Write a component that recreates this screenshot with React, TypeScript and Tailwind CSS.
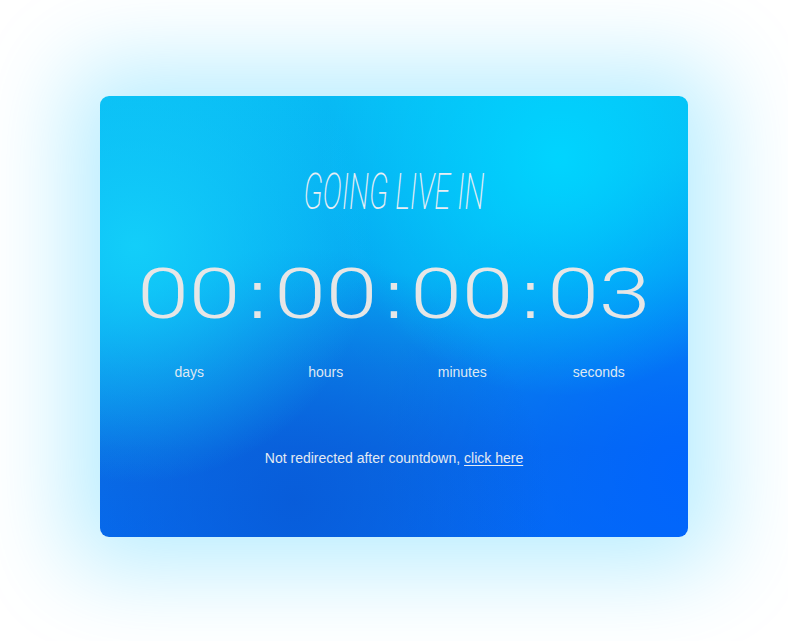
import React from "react";

const cols = [
  { v: "00", l: "days" },
  { v: "00", l: "hours" },
  { v: "00", l: "minutes" },
  { v: "03", l: "seconds" },
];

export default function App() {
  return (
    <div className="min-h-screen w-full bg-white flex justify-center pt-[96px]">
      <div
        className="w-[588px] h-[441px] rounded-[9px] shadow-[0_0_90px_30px_rgba(0,190,255,0.28)] flex flex-col items-center bg-[radial-gradient(circle_at_78%_14%,rgba(0,214,255,0.95)_0%,rgba(0,214,255,0)_40%),radial-gradient(circle_at_6%_34%,rgba(20,210,250,0.9)_0%,rgba(20,210,250,0)_38%),radial-gradient(circle_at_33%_92%,rgba(8,90,215,0.85)_0%,rgba(8,90,215,0)_45%),radial-gradient(circle_at_100%_85%,rgba(0,100,255,0.9)_0%,rgba(0,100,255,0)_45%),linear-gradient(180deg,#08baf4_0%,#06a8f2_40%,#0a86ea_62%,#0a6ee6_80%,#066cf0_100%)]"
        style={{ fontFamily: "Roboto, 'Liberation Sans', sans-serif" }}
      >
        <div className="mt-[71px] h-[49px] flex justify-center">
          <span
            className="inline-block text-[50px] leading-none italic font-extralight text-[#e8eef4] scale-x-[0.58] origin-center whitespace-nowrap"
            style={{ fontFamily: "Roboto, sans-serif" }}
          >
            GOING LIVE IN
          </span>
        </div>

        <div className="mt-[43px] flex w-[546px]">
          {cols.map((c, i) => (
            <React.Fragment key={i}>
              <div className="flex-1 flex justify-center">
                <span className="inline-block text-[70px] leading-none font-light text-[#e6e6e6] scale-x-[1.33] whitespace-nowrap">
                  {c.v}
                </span>
              </div>
              {i < 3 && (
                <div className="w-0 flex justify-center">
                  <span
                    className="text-[66px] leading-none text-[#e6e6e6] translate-y-[3px]"
                    style={{ fontFamily: "'Liberation Sans', Arial, sans-serif" }}
                  >
                    :
                  </span>
                </div>
              )}
            </React.Fragment>
          ))}
        </div>

        <div
          className="mt-[33px] flex w-[546px]"
          style={{ fontFamily: "'Liberation Sans', Arial, sans-serif" }}
        >
          {cols.map((c, i) => (
            <div key={i} className="flex-1 text-center text-[14px] leading-[20px] text-[#dfe8f2]">
              {c.l}
            </div>
          ))}
        </div>

        <div
          className="mt-[66px] text-[14px] leading-[20px] text-[#e3eaf2]"
          style={{ fontFamily: "'Liberation Sans', Arial, sans-serif" }}
        >
          Not redirected after countdown,{" "}
          <a href="#" className="underline underline-offset-2">
            click here
          </a>
        </div>
      </div>
    </div>
  );
}
